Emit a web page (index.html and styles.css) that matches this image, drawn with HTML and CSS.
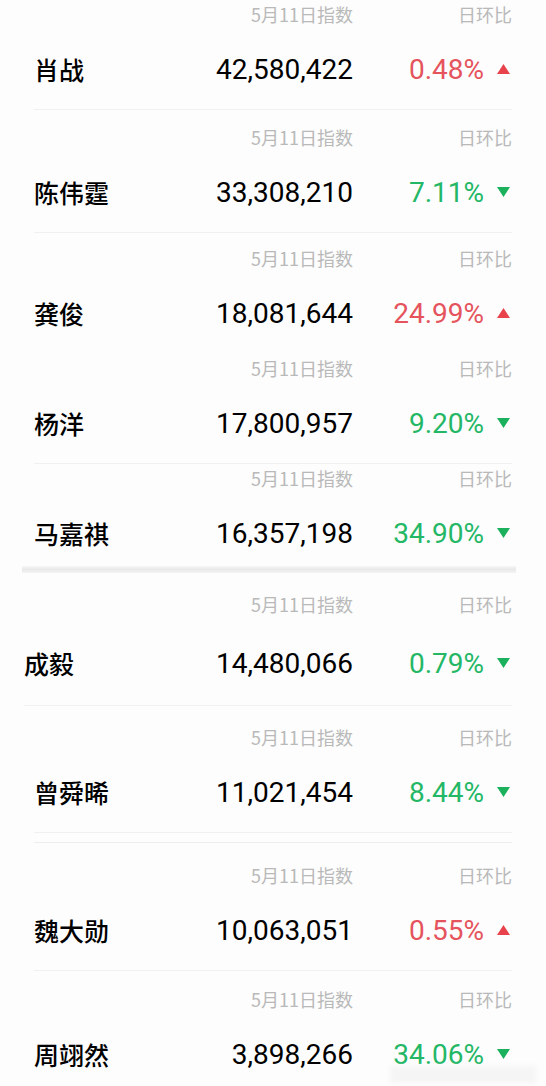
FILE: index.html
```html
<!DOCTYPE html>
<html lang="zh-CN">
<head>
    <meta charset="UTF-8">
    <meta name="viewport" content="width=device-width, initial-scale=1.0">
    <title>5月11日指数</title>
    <link rel="stylesheet" href="styles.css">
</head>
<body>
    <div class="board">
        <!-- 肖战 -->
        <div class="item">
            <div class="item-head"><span class="col-index">5月11日指数</span><span class="col-delta">日环比</span></div>
            <div class="item-main">
                <span class="name">肖战</span>
                <span class="index">42,580,422</span>
                <span class="delta up">0.48%<svg viewBox="0 0 13 10"><polygon points="6.5,0 13,10 0,10"/></svg></span>
            </div>
        </div>

        <!-- 陈伟霆 -->
        <div class="item mt-13">
            <div class="item-head"><span class="col-index">5月11日指数</span><span class="col-delta">日环比</span></div>
            <div class="item-main">
                <span class="name">陈伟霆</span>
                <span class="index">33,308,210</span>
                <span class="delta down">7.11%<svg viewBox="0 0 13 10"><polygon points="0,0 13,0 6.5,10"/></svg></span>
            </div>
        </div>

        <!-- 龚俊 -->
        <div class="item plain mt-11">
            <div class="item-head"><span class="col-index">5月11日指数</span><span class="col-delta">日环比</span></div>
            <div class="item-main">
                <span class="name">龚俊</span>
                <span class="index">18,081,644</span>
                <span class="delta up">24.99%<svg viewBox="0 0 13 10"><polygon points="6.5,0 13,10 0,10"/></svg></span>
            </div>
        </div>

        <!-- 杨洋 -->
        <div class="item">
            <div class="item-head"><span class="col-index">5月11日指数</span><span class="col-delta">日环比</span></div>
            <div class="item-main">
                <span class="name">杨洋</span>
                <span class="index">17,800,957</span>
                <span class="delta down">9.20%<svg viewBox="0 0 13 10"><polygon points="0,0 13,0 6.5,10"/></svg></span>
            </div>
        </div>

        <!-- 马嘉祺 -->
        <div class="item plain last">
            <div class="item-head"><span class="col-index">5月11日指数</span><span class="col-delta">日环比</span></div>
            <div class="item-main">
                <span class="name">马嘉祺</span>
                <span class="index">16,357,198</span>
                <span class="delta down">34.90%<svg viewBox="0 0 13 10"><polygon points="0,0 13,0 6.5,10"/></svg></span>
            </div>
        </div>

        <!-- 分隔条 -->
        <div class="section-gap"></div>

        <!-- 成毅 -->
        <div class="item shifted mt-17">
            <div class="item-head"><span class="col-index">5月11日指数</span><span class="col-delta">日环比</span></div>
            <div class="item-main">
                <span class="name">成毅</span>
                <span class="index">14,480,066</span>
                <span class="delta down">0.79%<svg viewBox="0 0 13 10"><polygon points="0,0 13,0 6.5,10"/></svg></span>
            </div>
        </div>

        <!-- 曾舜晞 -->
        <div class="item mt-17">
            <div class="item-head"><span class="col-index">5月11日指数</span><span class="col-delta">日环比</span></div>
            <div class="item-main">
                <span class="name">曾舜晞</span>
                <span class="index">11,021,454</span>
                <span class="delta down">8.44%<svg viewBox="0 0 13 10"><polygon points="0,0 13,0 6.5,10"/></svg></span>
            </div>
        </div>
        <div class="seam"></div>

        <!-- 魏大勋 -->
        <div class="item mt-18">
            <div class="item-head"><span class="col-index">5月11日指数</span><span class="col-delta">日环比</span></div>
            <div class="item-main">
                <span class="name">魏大勋</span>
                <span class="index">10,063,051</span>
                <span class="delta up">0.55%<svg viewBox="0 0 13 10"><polygon points="6.5,0 13,10 0,10"/></svg></span>
            </div>
        </div>

        <!-- 周翊然 -->
        <div class="item plain mt-14">
            <div class="item-head"><span class="col-index">5月11日指数</span><span class="col-delta">日环比</span></div>
            <div class="item-main">
                <span class="name">周翊然</span>
                <span class="index">3,898,266</span>
                <span class="delta down">34.06%<svg viewBox="0 0 13 10"><polygon points="0,0 13,0 6.5,10"/></svg></span>
            </div>
        </div>
    </div>

    <!-- 水印 -->
    <div class="watermark"></div>
</body>
</html>
```

FILE: styles.css
```css
body {
    margin: 0;
    height: 1086px;
    background-color: #fdfdfd;
    font-family: "Noto Sans CJK SC", "Noto Sans", sans-serif;
    color: #000;
    position: relative;
    overflow: hidden;
}

/* Lista */
.board {
    display: flex;
    flex-direction: column;
    padding: 0 34px;
}

.item {
    padding-bottom: 15px;
    border-bottom: 1px solid #f0f0f0;
}

.item.plain {
    border-bottom: none;
    padding-bottom: 16px;
}

.item.last {
    padding-bottom: 8px;
}

/* fila desplazada (captura distinta) */
.item.shifted {
    margin-left: -10px;
    padding-bottom: 17px;
}

.item.shifted .item-main {
    margin-top: 18px;
}

.mt-11 { margin-top: 11px; }
.mt-13 { margin-top: 13px; }
.mt-14 { margin-top: 14px; }
.mt-17 { margin-top: 17px; }
.mt-18 { margin-top: 18px; }

/* Cabecera gris */
.item-head {
    display: flex;
    justify-content: flex-end;
    height: 30px;
    line-height: 28px;
    font-size: 18px;
    color: #b9b9b9;
}

.col-index {
    width: 160px;
    text-align: right;
}

.col-delta {
    width: 159px;
    text-align: right;
}

/* Fila principal */
.item-main {
    display: flex;
    align-items: center;
    height: 50px;
    margin-top: 14px;
}

.name {
    flex: 1;
    font-size: 25px;
    font-weight: 500;
    color: #000;
}

.index {
    width: 160px;
    text-align: right;
    font-family: Roboto, "Liberation Sans", sans-serif;
    font-size: 28px;
    color: #000;
}

.delta {
    width: 159px;
    display: flex;
    justify-content: flex-end;
    align-items: center;
    padding-right: 2px;
    box-sizing: border-box;
    font-family: Roboto, "Liberation Sans", sans-serif;
    font-size: 28px;
}

.delta svg {
    width: 13px;
    height: 10px;
    margin-left: 13px;
}

.up {
    color: #e5545d;
}

.up svg {
    fill: #e8434d;
}

.down {
    color: #24b766;
}

.down svg {
    fill: #1bb05c;
}

/* Separadores */
.section-gap {
    height: 7px;
    margin: 0 -4px 0 -12px;
    background: linear-gradient(to bottom, #f6f6f6, #e9e9e9, #f4f4f4);
}

.seam {
    margin-top: 9px;
    border-top: 1px solid #eeeeee;
}

/* Marca de agua */
.watermark {
    position: absolute;
    right: 10px;
    bottom: 3px;
    width: 146px;
    height: 17px;
    background-color: rgba(244, 244, 244, 0.92);
    filter: blur(2px);
}
```
